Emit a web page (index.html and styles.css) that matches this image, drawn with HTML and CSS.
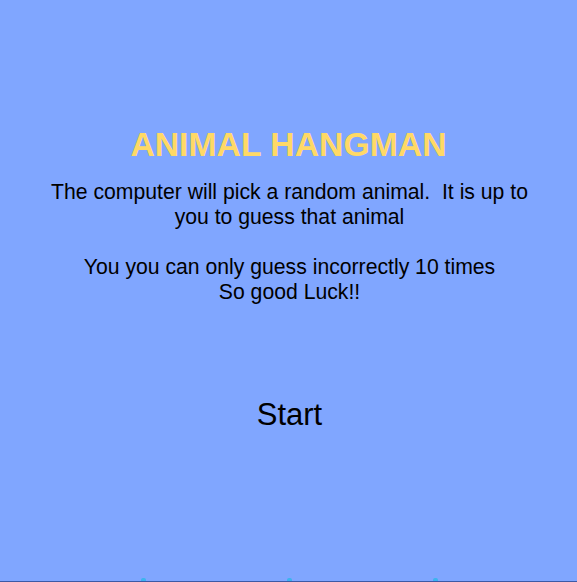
FILE: index.html
```html
<!DOCTYPE html>
<html>
<head>
<meta charset="utf-8">
<link rel="stylesheet" href="styles.css">
</head>
<body>
<div class="page">
  <main class="intro">
    <h1 class="title">ANIMAL HANGMAN</h1>
    <p class="desc">The computer will pick a random animal.&nbsp; It is up to<br>you to guess that animal<br><br>You you can only guess incorrectly 10 times<br>So good Luck!!</p>
    <div class="start">Start</div>
  </main>
  <footer class="bottom">
    <span class="mark"></span>
    <span class="mark"></span>
    <span class="mark"></span>
  </footer>
</div>
</body>
</html>
```
FILE: styles.css
```css
html, body {
  margin: 0;
  padding: 0;
}
body {
  background: #80a6ff;
  font-family: "Liberation Sans", Arial, sans-serif;
  color: #000;
  width: 577px;
  height: 582px;
  overflow: hidden;
}
.page {
  height: 582px;
  display: flex;
  flex-direction: column;
}
.intro {
  flex: 1;
  display: flex;
  flex-direction: column;
  align-items: center;
  text-align: center;
  padding-top: 125px;
}
.title {
  margin: 0;
  font-size: 33.75px;
  font-weight: bold;
  line-height: 38px;
  color: #ffd966;
}
.desc {
  margin: 16px 0 0;
  padding-left: 2px;
  font-size: 21.2px;
  line-height: 25px;
}
.start {
  margin-top: 93px;
  padding-left: 2px;
  font-size: 31px;
  line-height: 36px;
}
.bottom {
  height: 3px;
  border-bottom: 1px solid #3d5aa6;
  display: flex;
  align-items: flex-end;
  padding-left: 141px;
  gap: 141px;
}
.mark {
  width: 5px;
  height: 3px;
  background: #3cb4ee;
  border-radius: 2px 2px 0 0;
}
```
